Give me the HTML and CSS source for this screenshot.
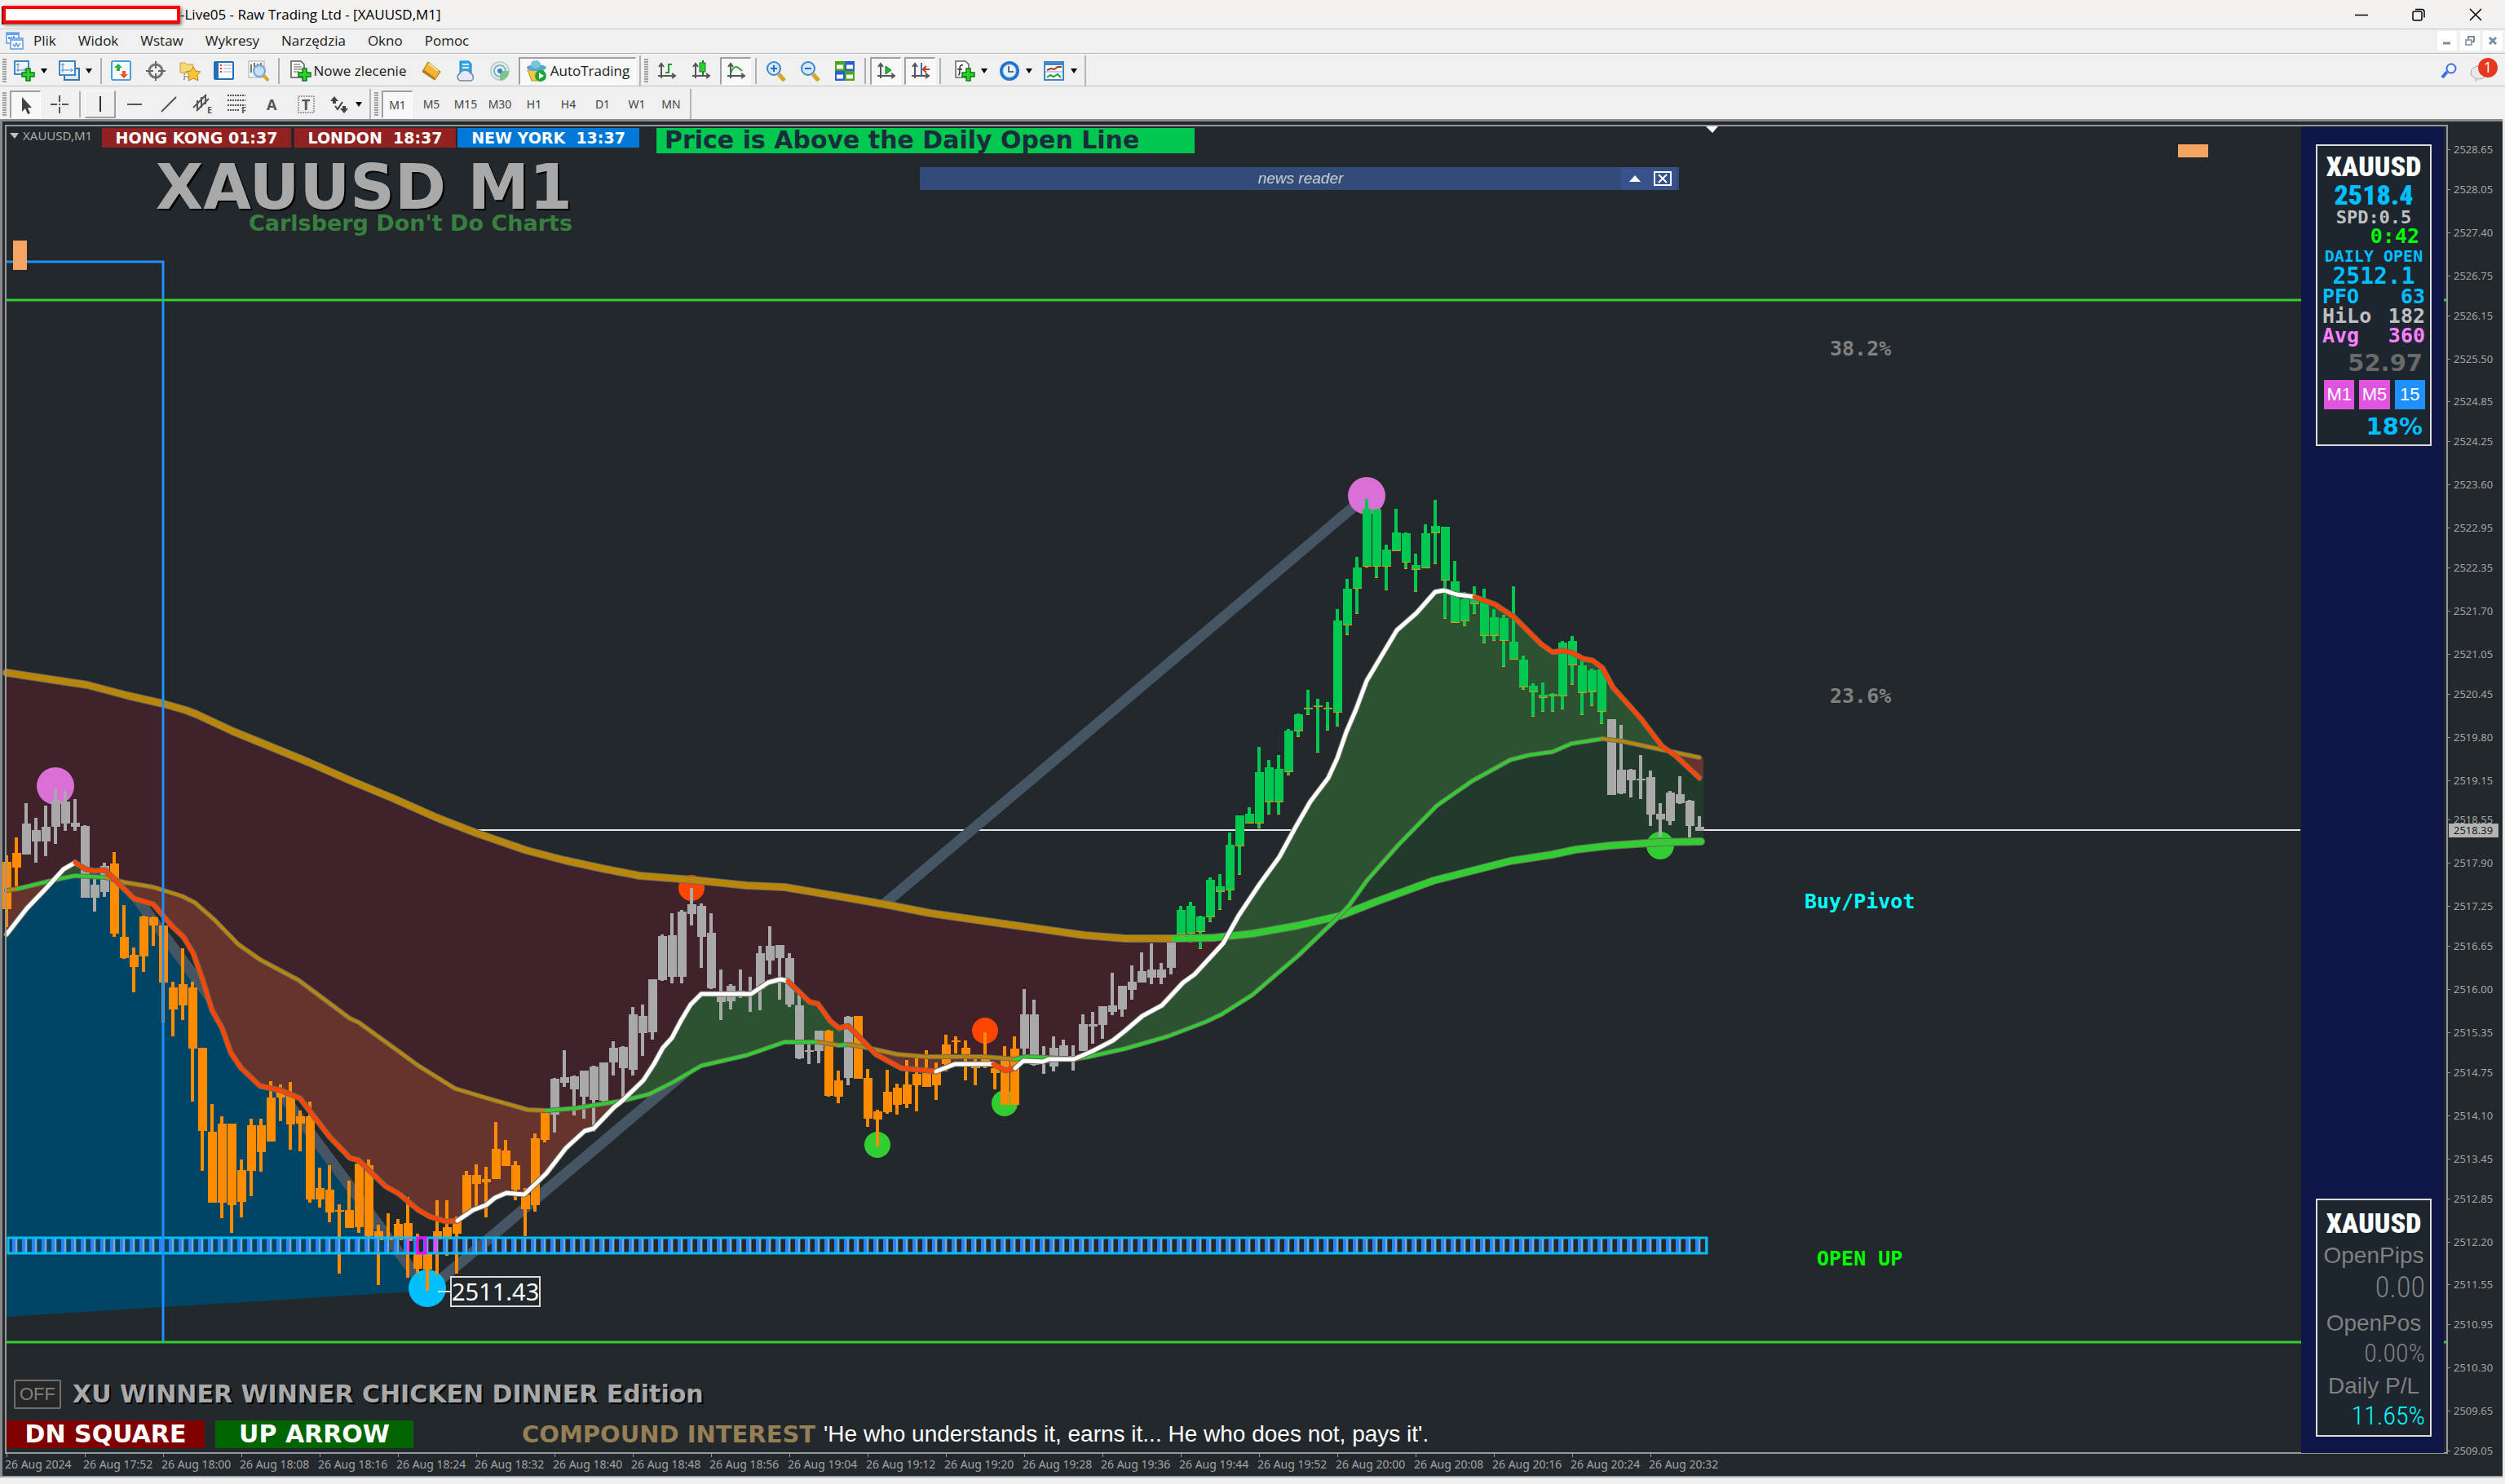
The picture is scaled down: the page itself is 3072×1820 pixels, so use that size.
FILE: index.html
```html
<!DOCTYPE html>
<html lang="pl">
<head>
<meta charset="utf-8">
<title>Live05 - Raw Trading Ltd - [XAUUSD,M1]</title>
<link rel="stylesheet" href="styles.css">
</head>
<body>
<svg class="defs" aria-hidden="true">
  <defs>
    <symbol id="axes" viewBox="0 0 26 26"><path d="M6 5v17M2 19h20M3 8l3-4 3 4M19 16l4 3-4 3" fill="none" stroke="#555" stroke-width="2"/></symbol>
    <symbol id="plus" viewBox="0 0 26 26"><path d="M15 10h5v5h5v5h-5v5h-5v-5h-5v-5h5z" fill="#2fd12f" stroke="#0b7d12" stroke-width="1.5"/></symbol>
    <symbol id="caret" viewBox="0 0 8 6"><path d="M0 0h8l-4 6z" fill="#000"/></symbol>
  </defs>
</svg>

<header class="titlebar">
  <span class="redacted"></span>
  <span class="title">-Live05 - Raw Trading Ltd - [XAUUSD,M1]</span>
  <div class="window-controls">
    <button aria-label="Minimize"><svg width="16" height="16"><path d="M0 8.500h16" stroke="#000" stroke-width="1.500"/></svg></button>
    <button aria-label="Restore"><svg width="16" height="16"><rect x="1" y="4" width="11" height="11" rx="2" fill="none" stroke="#000" stroke-width="1.500"/><path d="M4 1.500h8a3 3 0 0 1 3 3v7" fill="none" stroke="#000" stroke-width="1.500"/></svg></button>
    <button aria-label="Close"><svg width="16" height="16"><path d="M1 1l14 14M15 1L1 15" stroke="#000" stroke-width="1.500"/></svg></button>
  </div>
</header>

<nav class="menubar">
  <svg class="menu-logo" width="22" height="22"><rect x="1" y="1" width="15" height="13" fill="#fff" stroke="#5b9bea" stroke-width="1.500"/><path d="M1 3h15M4 9V6M7 10V6M10 9V5" stroke="#5b9bea" stroke-width="2"/><rect x="6" y="8" width="15" height="13" fill="#fff" stroke="#5b9bea" stroke-width="1.500"/><path d="M6 10h15M9 15l2 3 2-4 2 4 3-4" fill="none" stroke="#5b9bea" stroke-width="1.500"/></svg>
  <a href="#">Plik</a><a href="#">Widok</a><a href="#">Wstaw</a><a href="#">Wykresy</a><a href="#">Narzędzia</a><a href="#">Okno</a><a href="#">Pomoc</a>
  <div class="mdi-controls">
    <button aria-label="Minimize chart"><svg width="12" height="12"><path d="M1 9h9" stroke="#7c8b99" stroke-width="3"/></svg></button>
    <button aria-label="Restore chart"><svg width="12" height="12"><path d="M4 4V1h7v6H8" fill="none" stroke="#7c8b99" stroke-width="2"/><rect x="1" y="5" width="7" height="6" fill="none" stroke="#7c8b99" stroke-width="1.500"/></svg></button>
    <button aria-label="Close chart"><svg width="12" height="12"><path d="M2 2l8 8M10 2l-8 8" stroke="#7c8b99" stroke-width="3"/></svg></button>
  </div>
</nav>

<div class="toolbar toolbar-main">
  <span class="grip"></span>
  <button class="drop" aria-label="New chart"><svg width="26" height="26"><rect x="1" y="1" width="17" height="16" fill="#eef6ff" stroke="#3d87c9" stroke-width="2"/><path d="M5 4v10M3 12h11M3 6l2-2 2 2M12 10l2 2-2 2" stroke="#5b86ad" fill="none"/><use href="#plus"/></svg><svg width="8" height="6"><use href="#caret"/></svg></button>
  <button class="drop" aria-label="Profiles"><svg width="26" height="26"><rect x="7" y="10" width="18" height="14" fill="#d9eafb" stroke="#3d77a9" stroke-width="2"/><rect x="1" y="1" width="19" height="17" fill="#eef6ff" stroke="#3d87c9" stroke-width="2"/><path d="M5 4v11M3 12h14M3 6l2-2 2 2M15 10l2 2-2 2" stroke="#5b86ad" fill="none"/></svg><svg width="8" height="6"><use href="#caret"/></svg></button>
  <span class="sep"></span>
  <button aria-label="Market watch"><svg width="26" height="26"><rect x="1" y="1" width="23" height="23" rx="2" fill="#f4faff" stroke="#4aa0dc" stroke-width="2"/><path d="M9 4l5 5h-3v4H7V9H4z" fill="#22b14c"/><path d="M16 22l-5-5h3v-4h4v4h3z" fill="#f4511e"/></svg></button>
  <button aria-label="Data window"><svg width="26" height="26"><circle cx="13" cy="13" r="8" fill="none" stroke="#777" stroke-width="3"/><path d="M13 1v9M13 16v9M1 13h9M16 13h9" stroke="#666" stroke-width="2"/></svg></button>
  <button aria-label="Navigator"><svg width="26" height="26"><path d="M1 3h6l2 2h8v10H1z" fill="#f8d977" stroke="#c8a03a"/><path d="M6 16v9M6 20h6" stroke="#444" stroke-dasharray="2 1"/><path d="M17 8l3 5 6 1-4 4 1 7-6-3-6 3 1-7-4-4 6-1z" fill="#fbc531" stroke="#b9832a"/></svg></button>
  <button aria-label="Terminal"><svg width="26" height="26"><rect x="1" y="2" width="23" height="21" rx="1" fill="#fff" stroke="#1f6fb5" stroke-width="2"/><path d="M4 2v21" stroke="#1f6fb5" stroke-width="4"/><path d="M8 6h2M8 10h2M8 14h2" stroke="#e33" stroke-width="2"/><path d="M12 6h10M12 10h10M12 14h10" stroke="#9ab"/></svg></button>
  <button aria-label="Strategy tester"><svg width="26" height="26"><rect x="1" y="1" width="19" height="20" fill="#f6f6f0" stroke="#aaa"/><path d="M4 5v10M8 3v10M12 4v6M16 3v8" stroke="#777" stroke-width="2"/><circle cx="14" cy="13" r="7" fill="#bcdcf8" fill-opacity=".85" stroke="#6fa7d6" stroke-width="2"/><path d="M19 18l6 7" stroke="#d8a52c" stroke-width="4"/></svg></button>
  <span class="sep"></span>
  <button class="labelled"><svg width="26" height="26"><path d="M1 1h12l4 4v16H1z" fill="#fff" stroke="#555" stroke-width="1.500"/><path d="M4 5h8M4 8h10M4 11h10M4 14h7" stroke="#555"/><use href="#plus"/></svg>Nowe zlecenie</button>
  <button aria-label="MetaEditor"><svg width="26" height="26"><path d="M9 2l15 12-7 10L2 14z" fill="#f0b531" stroke="#9a6a10"/><path d="M2 14l15 10v-3L3 11z" fill="#b87b12"/><path d="M10 4l11 9" stroke="#fde29a" stroke-width="2"/></svg></button>
  <button aria-label="Cloud"><svg width="26" height="26"><path d="M6 1h11l3 3v13H6z" fill="#2fa8ea" stroke="#1682c4"/><path d="M9 5h8M9 9h8" stroke="#d6f0ff" stroke-width="2"/><path d="M6 25a5 5 0 0 1 0-9 7 6 0 0 1 13 0 5 5 0 0 1 1 9z" fill="#e3ebf5" stroke="#7488ad" stroke-width="1.500"/></svg></button>
  <button aria-label="Signals"><svg width="26" height="26"><circle cx="13" cy="13" r="11" fill="none" stroke="#b9d3cf" stroke-width="2"/><circle cx="13" cy="13" r="7" fill="none" stroke="#7fb3c9" stroke-width="2"/><path d="M13 13v12a12 12 0 0 0 11-12z" fill="#7cc48a"/><circle cx="13" cy="13" r="3" fill="#2f86d6"/></svg></button>
  <button class="labelled auto pressed"><svg width="26" height="26"><path d="M2 12h20l-4 13H7z" fill="#f3c545" stroke="#b98c1c"/><ellipse cx="13" cy="9" rx="12" ry="4" fill="#56a7cf"/><ellipse cx="12" cy="5" rx="6" ry="5" fill="#7bc3e2"/><circle cx="18" cy="19" r="7" fill="#18a832"/><path d="M16 15l6 4-6 4z" fill="#fff"/></svg>AutoTrading</button>
  <span class="edge"></span>
  <span class="grip"></span>
  <button aria-label="Bar chart"><svg width="26" height="26"><use href="#axes"/><path d="M15 4v12M15 5h4M11 15h4" stroke="#169c2e" stroke-width="2" fill="none"/></svg></button>
  <button aria-label="Candlesticks"><svg width="26" height="26"><use href="#axes"/><path d="M15 0v18" stroke="#0e7d20" stroke-width="2"/><rect x="11" y="3" width="7" height="11" fill="#2fd12f" stroke="#0e7d20"/></svg></button>
  <button class="pressed" aria-label="Line chart"><svg width="26" height="26"><use href="#axes"/><path d="M6 16C10 6 13 6 20 13" stroke="#2aa53c" stroke-width="2" fill="none"/></svg></button>
  <span class="sep"></span>
  <button aria-label="Zoom in"><svg width="26" height="26"><path d="M16 17l7 8" stroke="#d8a52c" stroke-width="5"/><circle cx="10" cy="10" r="8" fill="#d3eafc" stroke="#3d87c9" stroke-width="2"/><path d="M6 10h8M10 6v8" stroke="#1f6fb5" stroke-width="2"/></svg></button>
  <button aria-label="Zoom out"><svg width="26" height="26"><path d="M16 17l7 8" stroke="#d8a52c" stroke-width="5"/><circle cx="10" cy="10" r="8" fill="#d3eafc" stroke="#3d87c9" stroke-width="2"/><path d="M6 10h8" stroke="#1f6fb5" stroke-width="2"/></svg></button>
  <button aria-label="Tile windows"><svg width="26" height="26"><rect x="1" y="1" width="12" height="12" fill="#4aa818"/><rect x="13" y="1" width="12" height="12" fill="#2a5fd0"/><rect x="1" y="13" width="12" height="12" fill="#2a5fd0"/><rect x="13" y="13" width="12" height="12" fill="#4aa818"/><path d="M3 8h8M15 8h8M3 20h8M15 20h8" stroke="#f5faf5" stroke-width="5"/></svg></button>
  <span class="sep"></span>
  <button class="pressed" aria-label="Auto scroll"><svg width="26" height="26"><use href="#axes"/><path d="M12 7l7 5-7 5z" fill="#25b53a" stroke="#0e7d20"/></svg></button>
  <button class="pressed" aria-label="Chart shift"><svg width="26" height="26"><use href="#axes"/><path d="M14 3v15" stroke="#2f6fb5" stroke-width="2"/><path d="M24 11h-7M20 7l-4 4 4 4" stroke="#c43a12" stroke-width="2" fill="none"/></svg></button>
  <span class="sep"></span>
  <button class="drop first" aria-label="Indicators"><svg width="26" height="26"><path d="M2 1h12l4 4v16H2z" fill="#fff" stroke="#666" stroke-width="1.500"/><path d="M11 6c-4-1-4 2-4 6s0 6-2 6M4 11h6" stroke="#333" fill="none" stroke-width="1.500"/><use href="#plus"/></svg><svg width="8" height="6"><use href="#caret"/></svg></button>
  <button class="drop" aria-label="Periods"><svg width="26" height="26"><circle cx="13" cy="13" r="12" fill="#1f74d0"/><circle cx="13" cy="13" r="8" fill="#e9f3fc" stroke="#9cc4ea"/><path d="M12 7v7h6" stroke="#345" stroke-width="1.500" fill="none"/></svg><svg width="8" height="6"><use href="#caret"/></svg></button>
  <button class="drop" aria-label="Templates"><svg width="26" height="26"><rect x="1" y="2" width="23" height="22" fill="#fff" stroke="#3d87c9" stroke-width="2"/><path d="M1 4h23" stroke="#3d87c9" stroke-width="4"/><path d="M4 12l5-2 4 1 4-3h5" stroke="#a83420" stroke-width="2" fill="none"/><path d="M2 14h21" stroke="#89b"/><path d="M4 21l4-3 4 2 5-3 4 4" stroke="#2a9a3c" stroke-width="2" fill="none"/></svg><svg width="8" height="6"><use href="#caret"/></svg></button>
  <span class="edge"></span>
  <div class="toolbar-right">
    <button aria-label="Search"><svg width="20" height="20"><circle cx="13" cy="7" r="5.500" fill="#f3f7ff" stroke="#3b6fe0" stroke-width="2"/><path d="M8 11l-6 7" stroke="#3b6fe0" stroke-width="4"/></svg></button>
    <button aria-label="Messages"><svg width="36" height="32"><ellipse cx="11" cy="18" rx="10" ry="8" fill="#e8e8ea" stroke="#aaa"/><path d="M6 24v6l6-5z" fill="#ccc"/><circle cx="22" cy="12" r="12" fill="#e4391f"/><text x="22" y="18" text-anchor="middle" class="badge">1</text></svg></button>
  </div>
</div>

<div class="toolbar toolbar-tools">
  <span class="grip"></span>
  <button class="pressed" aria-label="Cursor"><svg width="26" height="26"><path d="M8 3v18l4-4 3 7 3-1-3-7h5z" fill="#444"/></svg></button>
  <button aria-label="Crosshair"><svg width="26" height="26"><path d="M13 2v8M13 16v8M2 13h8M16 13h8M12 13h2" stroke="#555" stroke-width="2"/></svg></button>
  <span class="sep"></span>
  <button class="raised" aria-label="Vertical line"><svg width="26" height="26"><path d="M13 3v19" stroke="#333" stroke-width="2"/></svg></button>
  <button aria-label="Horizontal line"><svg width="26" height="26"><path d="M4 13h18" stroke="#555" stroke-width="2"/></svg></button>
  <button aria-label="Trendline"><svg width="26" height="26"><path d="M4 22L22 4" stroke="#555" stroke-width="2"/></svg></button>
  <button aria-label="Equidistant channel"><svg width="30" height="30"><path d="M3 19L19 3M7 23L22 8M8 10v12M13 6v13M18 3v12" stroke="#555" stroke-width="2"/><text x="20" y="26" class="glyph">E</text></svg></button>
  <button aria-label="Fibonacci"><svg width="30" height="30"><path d="M3 4h22M3 10h22M3 16h22M3 22h14" stroke="#555" stroke-width="2" stroke-dasharray="2 1"/><text x="20" y="26" class="glyph">F</text></svg></button>
  <button aria-label="Text"><svg width="26" height="26"><text x="7" y="20" class="glyph big">A</text></svg></button>
  <button aria-label="Text label"><svg width="26" height="26"><rect x="4" y="3" width="19" height="20" fill="none" stroke="#555" stroke-dasharray="2 1"/><text x="8" y="20" class="glyph big">T</text></svg></button>
  <button class="drop narrow" aria-label="Arrows"><svg width="26" height="26"><path d="M7 3l5 6H9v3H5V9H2zM19 24l-5-6h3v-3h4v3h3z" fill="#444"/><path d="M8 15l3 4 6-9" stroke="#444" stroke-width="2" fill="none"/></svg><svg width="8" height="6"><use href="#caret"/></svg></button>
  <span class="edge"></span>
  <span class="grip"></span>
  <button class="pressed">M1</button><button>M5</button><button>M15</button><button>M30</button><button>H1</button><button>H4</button><button>D1</button><button>W1</button><button>MN</button>
  <span class="edge"></span>
</div>

<main class="chart">
  <svg id="plot" class="plot" viewBox="0 146 3072 1666" preserveAspectRatio="xMinYMin slice"></svg>

  <div class="overlay">
    <section class="left">
      <div class="sessions">
        <span class="symbol"><svg width="11" height="7"><path d="M0 0h11l-5 7z" fill="#c0c0c0"/></svg>XAUUSD,M1</span>
        <span class="clock closed hk">HONG KONG 01:37</span>
        <span class="clock closed ldn">LONDON&nbsp; 18:37</span>
        <span class="clock open ny">NEW YORK&nbsp; 13:37</span>
        <span class="banner">Price is Above the Daily Open Line</span>
      </div>
      <div class="heading">
        <h1>XAUUSD M1</h1>
        <p>Carlsberg Don't Do Charts</p>
      </div>
      <div class="status">
        <div class="status-row">
          <button class="off">OFF</button>
          <span class="edition">XU WINNER WINNER CHICKEN DINNER Edition</span>
        </div>
        <div class="status-row">
          <span class="tag dn">DN SQUARE</span>
          <span class="tag up">UP ARROW</span>
          <span class="compound">COMPOUND INTEREST</span>
          <span class="quote">'He who understands it, earns it... He who does not, pays it'.</span>
        </div>
      </div>
    </section>

    <aside class="side">
      <div class="panel">
        <div class="sym">XAUUSD</div>
        <div class="sym price">2518.4</div>
        <div class="mono spd">SPD:0.5</div>
        <div class="mono timer">0:42</div>
        <div class="mono daily">DAILY OPEN</div>
        <div class="mono open-price">2512.1</div>
        <div class="mono pair blue"><span>PFO</span><span>63</span></div>
        <div class="mono pair grey"><span>HiLo</span><span>182</span></div>
        <div class="mono pair pink"><span>Avg</span><span>360</span></div>
        <div class="heavy dim">52.97</div>
        <div class="frames"><button>M1</button><button>M5</button><button class="alt">15</button></div>
        <div class="heavy pct">18%</div>
      </div>
      <div class="panel lower">
        <div class="sym">XAUUSD</div>
        <div class="caption">OpenPips</div>
        <div class="digits large">0.00</div>
        <div class="caption">OpenPos</div>
        <div class="digits">0.00%</div>
        <div class="caption">Daily P/L</div>
        <div class="digits gain">11.65%</div>
      </div>
    </aside>
  </div>

  <div class="news">
    <span>news reader</span>
    <button aria-label="Collapse"><svg width="14" height="8"><path d="M0 8h14l-7-8z" fill="#fff"/></svg></button>
    <button aria-label="Close news"><svg width="22" height="18"><rect x="1" y="1" width="20" height="16" fill="none" stroke="#fff" stroke-width="2"/><path d="M6 4l10 10M16 4L6 14" stroke="#fff" stroke-width="2"/></svg></button>
  </div>
</main>
<script src="chart.js"></script>
</body>
</html>
```

FILE: styles.css
```css
* { box-sizing: border-box; }
body {
  margin: 0;
  min-height: 100vh;
  display: flex;
  flex-direction: column;
  background: #f0f0f0;
  font: 17px/20px "Open Sans", "Noto Sans", sans-serif;
  color: #000;
  overflow-x: hidden;
}
button { font: inherit; color: inherit; border: 0; padding: 0; margin: 0; background: none; }
svg { display: block; flex: none; }
.defs { position: absolute; width: 0; height: 0; }

.titlebar { height: 35px; display: flex; align-items: center; background: #f3f2f1; padding-left: 3px; }
.redacted { width: 218px; height: 22px; background: #fff; border: 4px solid #f00; box-shadow: 2px 2px 4px #888, -1px 1px 0 #000; }
.window-controls { margin-left: auto; display: flex; gap: 54px; padding-right: 28px; }

.menubar { height: 31px; display: flex; align-items: center; border-top: 1px solid #c8c8c8; border-bottom: 1px solid #b4b4b4; padding: 0 3px 2px 7px; gap: 27px; }
.menubar a { color: #1a1a1a; text-decoration: none; }
.menu-logo { margin-right: -15px; }
.mdi-controls { margin-left: auto; display: flex; gap: 4px; }
.mdi-controls button { width: 24px; height: 24px; background: #fff; display: grid; place-items: center; }

.toolbar { height: 40px; display: flex; align-items: center; gap: 4px; padding: 2px 0 0 3px; color: #1a1a1a; }
.toolbar-main { border-bottom: 1px solid #c0c0c0; box-shadow: inset 0 1px #fff; }
.toolbar button { width: 38px; height: 34px; display: flex; align-items: center; justify-content: center; }
.toolbar .grip { width: 5px; height: 30px; background: repeating-linear-gradient(#a0a0a0 0 2px, #f0f0f0 2px 3px); }
.toolbar .sep { width: 2px; height: 32px; margin: 0 1px; background: #b0b0b0; }
.toolbar .edge { width: 2px; height: 38px; background: #b4b4b4; }
.toolbar .drop { width: 51px; gap: 7px; }
.toolbar .drop.first { margin-left: 6px; }
.toolbar .pressed { background: #f8f8f8; border: 1px solid #fff; border-top: 2px solid #a0a0a0; border-left: 2px solid #a0a0a0; }
.toolbar .raised { border: 1px solid #fff; border-right: 2px solid #a0a0a0; border-bottom: 2px solid #a0a0a0; }
.toolbar .labelled { width: 158px; gap: 3px; white-space: nowrap; }
.toolbar .auto { width: 144px; gap: 4px; }
.toolbar-right { margin-left: auto; display: flex; padding-right: 6px; gap: 6px; }
.badge { font: 18px "Open Sans", sans-serif; fill: #fff; }
.glyph { font: bold 11px "Open Sans", sans-serif; fill: #555; }
.glyph.big { font-size: 18px; }
.toolbar-tools { padding-top: 4px; font: 14px/20px "Noto Sans", sans-serif; color: #444; }

.chart { position: relative; flex: 1; min-height: 1200px; margin-bottom: 8px; background: #23282c; overflow: hidden; }
.plot { position: absolute; inset: 0; width: 100%; height: 100%; }
.plot text { font-family: "Noto Sans", sans-serif; }
.plot .axis-price { font-size: 13px; fill: #a4a4a4; }
.plot .axis-time { font-size: 14px; fill: #a4a4a4; }
.plot .level { font: bold 25px "DejaVu Sans Mono", monospace; }
.plot .tip { font-size: 29px; fill: #fff; }

.overlay { position: absolute; inset: 9px 71px 30px 8px; display: flex; }
.left { flex: 1; display: flex; flex-direction: column; }
.sessions { display: flex; align-items: flex-start; padding-top: 2px; font: bold 19px/24px "DejaVu Sans", sans-serif; color: #fff; white-space: nowrap; }
.symbol { width: 117px; padding-left: 4px; display: flex; align-items: center; gap: 5px; font: 15px/18px "Noto Sans", sans-serif; color: #a8a8a8; }
.clock { height: 24px; text-align: center; }
.closed { background: #922222; }
.open { background: #0078d7; }
.hk { width: 232px; margin-right: 4px; }
.ldn { width: 198px; margin-right: 2px; }
.ny { width: 223px; margin-right: 21px; }
.banner { width: 660px; height: 31px; padding-left: 10px; background: #00c850; color: #1c2c3c; font-size: 30px; line-height: 30px; }
.heading { width: 694px; text-align: right; font: bold 27px/24px "DejaVu Sans", sans-serif; }
.heading h1 { margin: 10px 0 0; font-size: 76px; line-height: 64px; color: #a9a9a9; text-shadow: 2px 2px #000; white-space: nowrap; }
.heading p { margin: 0; color: #37803f; }
.status { margin-top: auto; padding-bottom: 6px; display: grid; gap: 14px; }
.status-row { display: flex; align-items: center; height: 35px; white-space: nowrap; }
.off { width: 58px; height: 36px; margin: 0 14px 0 9px; border: 2px solid #6e6e6e; border-radius: 2px; background: #262626; color: #808080; font: 22px/30px "Liberation Sans", sans-serif; }
.edition { font: bold 30px/34px "DejaVu Sans", sans-serif; color: #a9a9a9; text-shadow: 2px 2px #000; }
.tag { width: 243px; text-align: center; color: #fff; margin-right: 13px; font: bold 30px/34px "DejaVu Sans", sans-serif; }
.dn { background: #800000; }
.up { background: #006400; }
.compound { width: 370px; margin-left: 120px; color: #967f55; font: bold 29px/34px "DejaVu Sans", sans-serif; }
.quote { font: 28px/34px "Liberation Sans", sans-serif; color: #fff; }

.side { width: 175px; margin-right: 4px; padding: 22px 15px 20px 18px; background: #0e1748; display: flex; flex-direction: column; justify-content: space-between; }
.panel { height: 370px; border: 2px solid #dcdcdc; background: #1d262f; padding: 7px 6px 0; white-space: nowrap; }
.lower { height: 292px; padding-top: 10px; }
.sym { font: 900 34px/36px "Roboto Condensed", Roboto, sans-serif; color: #fff; text-align: center; }
.price { color: #00bfff; line-height: 34px; }
.mono { font: bold 25px/24px "DejaVu Sans Mono", monospace; }
.spd { font-size: 22px; line-height: 22px; color: #c0c0c0; text-align: center; }
.timer { color: #0f0; text-align: right; padding-right: 7px; }
.daily { font-size: 20px; color: #00bfff; text-align: center; }
.open-price { font-size: 28px; line-height: 26px; color: #00bfff; text-align: center; }
.pair { display: flex; justify-content: space-between; }
.blue { color: #00bfff; }
.grey { color: #c0c0c0; }
.pink { color: #ff80ff; }
.heavy { font: bold 29px/42px "DejaVu Sans", sans-serif; text-align: right; padding-right: 3px; }
.dim { color: #696969; }
.pct { color: #00bfff; }
.frames { display: flex; gap: 6px; padding-left: 2px; }
.frames button { width: 38px; height: 36px; background: #e055e0; color: #fff; font: 22px/36px "Liberation Sans", sans-serif; }
.frames .alt { background: #1e90ff; }
.caption { font: 28px/34px "Liberation Sans", sans-serif; color: #808080; text-align: center; margin-top: 5px; }
.digits { font: 300 32px/38px "Roboto Condensed", Roboto, sans-serif; color: #808080; text-align: right; }
.large { font-size: 36px; line-height: 44px; }
.gain { color: #0ff; }

/* floating news window */
.news { position: absolute; left: 1128px; top: 59px; width: 931px; height: 28px; padding-right: 3px; display: flex; align-items: center; background: #324b78; color: #c8ccd4; font: italic 19px/28px "Liberation Sans", sans-serif; }
.news span { flex: 1; text-align: center; padding-left: 74px; }
.news button { width: 34px; height: 28px; display: grid; place-items: center; background: #37528a; }
```

FILE: chart.js
```js
const NS = 'http://www.w3.org/2000/svg';
const plot = document.getElementById('plot');
let defs;

function add(tag, attrs, text, parent) {
  const el = document.createElementNS(NS, tag);
  for (const k in attrs) el.setAttribute(k, attrs[k]);
  if (text) el.textContent = text;
  (parent || plot).appendChild(el);
  return el;
}
const rect = (x, y, width, height, fill, extra) => add('rect', { x, y, width, height, fill, ...extra });
const path = (d, attrs) => add('path', { d, fill: 'none', ...attrs });

// Moving averages: point lists, each run drawn in its own colour.
const GOLD = '#b8860b', LIME = '#32cd32', RED = '#ff4500', WHITE = '#ffffff';
const slow = [
  [GOLD, '8,825 67,834 107,840 156,853 200,863 228,871 241,876 286,897 335,917 379,935 429,957 482,979 536,1003 585,1022 646,1043 692,1055 738,1065 784,1074 848,1079 916,1086 962,1088 1039,1101 1090,1110 1141,1120 1238,1134 1330,1147 1380,1151 1441,1151'],
  [LIME, '1441,1151 1489,1150 1536,1145 1592,1135 1644,1123 1687,1106 1758,1080 1805,1068 1852,1056 1904,1048 1932,1042 1975,1037 2036,1033 2086,1032']
];
const mid = [
  [GOLD, '8,1092 22,1090'],
  [LIME, '22,1090 67,1079 92,1074 129,1076'],
  [GOLD, '129,1076 152,1082 188,1088 223,1099 239,1107 263,1128 292,1158 319,1177 366,1202 429,1249 440,1254 513,1307 558,1335 598,1347 647,1361 670,1362'],
  [LIME, '670,1362 707,1359 763,1350 796,1342 824,1328 860,1307 916,1294 962,1278 1003,1278'],
  [GOLD, '1003,1278 1029,1282'],
  [LIME, '1029,1282 1040,1281'],
  [GOLD, '1040,1281 1059,1284 1100,1293 1136,1296 1207,1296 1245,1299'],
  [LIME, '1245,1299 1258,1296 1284,1297 1317,1299 1335,1296 1380,1286 1432,1271 1479,1253 1498,1244 1536,1220 1592,1172 1640,1126 1654,1111 1677,1079 1715,1036 1762,988 1805,958 1852,932 1875,926 1904,922 1927,912 1965,906'],
  [GOLD, '1965,906 1989,909 2036,919 2084,929']
];
const fast = [
  [WHITE, '8,1146 33,1114 56,1090 78,1066 92,1058'],
  [RED, '92,1058 105,1066 116,1068 129,1067 164,1102 188,1109 212,1137 225,1149 237,1169 248,1200 260,1239 272,1260 283,1291 295,1309 319,1332 344,1337 368,1347 404,1394 429,1420 440,1423 473,1455 489,1464 513,1484 527,1492 547,1498 561,1497'],
  [WHITE, '561,1497 580,1484 596,1478 607,1469 621,1463 643,1465 670,1439 694,1408 717,1387 728,1384 753,1358 763,1350 789,1325 802,1305 813,1285 824,1273 835,1252 847,1232 860,1219 921,1219 942,1205 957,1201 966,1203'],
  [RED, '966,1203 993,1229 1003,1231 1018,1252 1029,1261 1040,1258 1054,1272 1074,1293 1105,1310 1148,1314'],
  [WHITE, '1148,1314 1171,1305 1218,1305'],
  [RED, '1218,1305 1233,1313 1245,1310'],
  [WHITE, '1245,1310 1255,1301 1279,1302 1286,1299 1317,1299 1340,1289 1365,1276 1380,1264 1401,1246 1425,1233 1451,1205 1465,1195 1500,1157 1519,1123 1545,1084 1569,1051 1588,1016 1607,983 1629,954 1640,930 1651,898 1663,870 1676,835 1713,773 1737,752 1760,726 1771,724 1786,729 1808,732'],
  [RED, '1808,732 1833,741 1857,757 1890,790 1904,800 1916,798 1927,800 1942,808 1953,810 1965,819 1978,843 2012,881 2038,915 2055,927 2084,954']
];

// Candles from 17:44, one a minute: colour, high, body top, body bottom, low.
const candles = `o 1049 1057 1115 1137|o 1027 1046 1064 1087|g 985 1010 1048 1048|g 1003 1018 1032 1058|g 988 1014 1032 1050|g 967 981 1014 1035|g 970 983 1010 1019|g 980 1009 1014 1019|g 1012 1013 1101 1101|g 1077 1085 1101 1118|g 1058 1062 1094 1100|o 1045 1059 1145 1149|o 1110 1149 1175 1176|o 1162 1171 1186 1217|o 1123 1124 1173 1192|o 1124 1125 1135 1160|o 1135 1135 1205 1254|o 1204 1211 1238 1271|o 1163 1207 1233 1251|o 1204 1211 1286 1351|o 1285 1285 1387 1436|o 1354 1388 1475 1475|o 1369 1378 1475 1494|o 1378 1378 1478 1512|o 1422 1435 1474 1493|o 1372 1380 1436 1467|o 1372 1380 1413 1437|o 1326 1346 1400 1400|o 1330 1339 1346 1375|o 1327 1344 1379 1410|o 1362 1369 1378 1412|o 1351 1369 1471 1475|o 1432 1457 1471 1481|o 1429 1459 1487 1499|o 1477 1484 1486 1562|o 1448 1484 1506 1506|o 1426 1427 1505 1512|o 1422 1429 1516 1520|o 1502 1510 1521 1576|o 1488 1518 1521 1522|o 1495 1501 1521 1523|o 1468 1500 1522 1567|o 1513 1537 1556 1561|o 1531 1536 1557 1583|o 1472 1510 1520 1563|o 1472 1505 1520 1540|o 1492 1496 1513 1562|o 1436 1441 1488 1493|o 1428 1441 1452 1480|o 1431 1446 1450 1493|o 1376 1409 1446 1446|o 1398 1411 1430 1430|o 1424 1429 1459 1472|o 1457 1465 1483 1516|o 1390 1396 1478 1486|o 1365 1365 1398 1401|g 1322 1323 1367 1389|g 1288 1321 1328 1333|g 1319 1320 1336 1368|g 1313 1313 1345 1372|g 1307 1308 1349 1388|g 1303 1303 1350 1351|g 1277 1285 1303 1319|g 1283 1284 1310 1348|g 1235 1244 1312 1319|g 1232 1246 1267 1295|g 1201 1201 1266 1275|g 1146 1148 1202 1203|g 1120 1147 1198 1206|g 1116 1118 1198 1206|g 1089 1109 1121 1135|g 1108 1111 1149 1187|g 1120 1144 1212 1213|g 1189 1222 1229 1251|g 1207 1209 1228 1238|g 1189 1215 1218 1224|g 1198 1217 1220 1241|g 1160 1169 1213 1239|g 1136 1160 1178 1195|g 1159 1159 1175 1226|g 1169 1175 1232 1235|g 1220 1233 1298 1299|g 1280 1288 1290 1305|g 1264 1264 1289 1304|o 1263 1264 1344 1345|o 1313 1325 1345 1353|g 1246 1247 1322 1331|o 1246 1246 1323 1323|o 1311 1322 1372 1382|o 1361 1363 1373 1406|o 1312 1339 1364 1366|o 1329 1334 1355 1367|o 1300 1330 1354 1359|o 1298 1317 1331 1363|o 1288 1313 1333 1333|o 1303 1315 1331 1349|o 1269 1281 1305 1314|o 1271 1276 1278 1292|o 1276 1285 1298 1325|o 1295 1308 1310 1331|o 1266 1296 1307 1310|o 1307 1310 1316 1336|o 1283 1297 1355 1355|o 1271 1286 1355 1355|g 1213 1244 1286 1297|g 1226 1244 1306 1307|g 1283 1298 1304 1317|g 1271 1285 1308 1314|g 1275 1282 1295 1295|g 1282 1295 1300 1313|g 1244 1256 1289 1289|g 1241 1256 1259 1280|g 1234 1234 1257 1274|g 1193 1233 1241 1245|g 1209 1209 1238 1247|g 1184 1204 1214 1226|g 1168 1191 1205 1205|g 1157 1189 1199 1207|g 1181 1189 1199 1207|g 1155 1155 1187 1195|u 1111 1116 1146 1146|u 1106 1111 1145 1156|u 1123 1124 1143 1164|u 1076 1079 1125 1131|u 1072 1087 1094 1116|u 1021 1036 1092 1104|u 1000 1000 1038 1073|u 990 998 1010 1010|u 916 947 1010 1016|u 932 941 984 999|u 926 943 984 999|u 894 896 947 951|u 875 876 897 904|u 846 868 869 877|u 857 865 867 923|u 861 868 869 896|u 747 761 874 891|u 710 722 767 779|u 683 696 722 753|u 612 624 695 696|u 624 625 695 709|u 668 674 695 724|u 624 653 676 676|u 653 654 690 698|u 679 693 699 726|u 643 654 697 697|u 613 645 654 692|u 646 646 712 759|u 688 713 764 764|u 726 735 762 768|u 719 731 741 753|u 722 736 780 789|u 747 757 780 786|u 754 758 786 818|u 719 787 809 809|u 804 809 843 846|u 838 841 849 879|u 837 852 856 873|u 850 851 854 873|u 786 788 854 870|u 780 786 816 840|u 805 816 850 877|u 820 822 849 866|u 815 821 873 888|g 882 882 975 975|g 889 944 973 974|g 943 944 957 978|g 926 955 956 980|g 945 953 999 1013|g 985 998 1005 1026|g 970 972 1007 1012|g 952 974 985 986|g 981 982 1013 1027|g 1001 1014 1019 1019`
  .split('|').map(c => c.split(' '));
const COLORS = { o: '#ff8c00', g: '#a9a9a9', u: '#00c850' };

const EDGE = 2089;
function points(runs) {
  const list = runs.map(r => r[1]).join(' ').split(' ');
  return [...list, `${EDGE},${list[list.length - 1].split(',')[1]}`];
}
const between = (a, b) => 'M' + [...points(a), ...points(b).reverse()].join(' L') + 'Z';

defs = add('defs', {});
function clip(id, runs, edge) {
  const c = add('clipPath', { id }, '', defs);
  const p = points(runs);
  add('path', { d: `M0,${edge} L0,${p[0].split(',')[1]} L${p.join(' L')} L${EDGE},${edge}Z` }, '', c);
}
clip('above-mid', mid, 0);
clip('below-mid', mid, 1812);
clip('above-slow', slow, 0);
clip('below-slow', slow, 1812);
const stripes = add('pattern', { id: 'stripes', x: 1971, y: 0, width: 12, height: 20, patternUnits: 'userSpaceOnUse' }, '', defs);
[[0, 3, '#1e86ff'], [3, 1, '#6a70cd'], [4, 2, '#58b4ee'], [6, 1, '#4a5a50']].forEach(([x, width, fill]) =>
  add('rect', { x, y: 0, width, height: 20, fill }, '', stripes));

// Current price line, range fill and zigzag
rect(8, 1017, 2813, 2, '#e6e6e6');
path('M8 1000 L68 967 L524 1583 L8 1615Z', { fill: '#004664' });
path('M68 967 L524 1583 L1676 608', { stroke: '#465564', 'stroke-width': 13 });

// Bands between the averages
path(between(slow, mid), { fill: '#40222a', 'clip-path': 'url(#below-slow)' });
path(between(slow, mid), { fill: '#213a2c', 'clip-path': 'url(#above-slow)' });
path(between(mid, fast), { fill: '#66342c', 'clip-path': 'url(#below-mid)' });
path(between(mid, fast), { fill: '#2b5331', 'clip-path': 'url(#above-mid)' });

// Swing markers
[[68, 964, 23, '#da70d6'], [848, 1089, 16, RED], [1076, 1404, 16, LIME], [1208, 1264, 16, RED],
 [1232, 1353, 16, LIME], [1676, 608, 23, '#da70d6'], [2036, 1037, 17, LIME], [524, 1580, 23, '#00bfff']]
  .forEach(([cx, cy, r, fill]) => add('circle', { cx, cy, r, fill }));

candles.forEach(([kind, high, top, bottom, low], i) => {
  const x = 8 + i * 12;
  rect(x - 2, high, 4, low - high, COLORS[kind]);
  rect(x - 5, top, 11, Math.max(2, bottom - top), COLORS[kind]);
  if (kind === 'u') {
    rect(x - 2, low - 1, 4, 1, COLORS.o);
    rect(x - 5, bottom - 1, 11, 1, COLORS.o);
  }
});

// Daily open box
rect(10, 1518, 2083, 19, 'url(#stripes)', { stroke: '#00bfff', 'stroke-width': 3 });
rect(499, 1519, 3, 17, '#ff40ff');
rect(532, 1519, 4, 17, '#ff40ff');
rect(512, 1518, 10, 19, 'none', { stroke: '#f0f', 'stroke-width': 3 });

function line(runs, width) {
  runs.forEach(([, p]) => path('M' + p.split(' ').join(' L'), { stroke: '#6b6b60', 'stroke-width': width + 2, 'stroke-linejoin': 'round', 'stroke-linecap': 'round' }));
  runs.forEach(([stroke, p]) => path('M' + p.split(' ').join(' L'), { stroke, 'stroke-width': width, 'stroke-linejoin': 'round', 'stroke-linecap': 'round' }));
}
line(slow, 8);
line(mid, 4);
line(fast, 5);

// Range lines
path('M8 321H200V1646', { stroke: '#1e90ff', 'stroke-width': 3 });
path('M8 368H3000M8 1646H3000', { stroke: LIME, 'stroke-width': 3 });

// Small markers
rect(16, 295, 17, 36, '#f4a460');
rect(2671, 177, 37, 16, '#f4a460');
path('M2092 155h15l-7 8z', { fill: '#fff' });

[['38.2%', 2244, 436, '#808080'], ['23.6%', 2244, 862, '#808080'], ['Buy/Pivot', 2213, 1114, '#00ffff'], ['OPEN UP', 2228, 1552, '#00ff00']]
  .forEach(([t, x, y, fill]) => add('text', { x, y, fill, class: 'level' }, t));

path('M537 1584H552', { stroke: '#dcdcdc', 'stroke-width': 2 });
rect(553, 1566, 109, 36, '#23282c', { stroke: '#dcdcdc', 'stroke-width': 2 });
add('text', { x: 554, y: 1595, class: 'tip' }, '2511.43');

// Frame
rect(0, 146, 3072, 3, '#8a8a8a');
rect(0, 146, 3, 1666, '#8a8a8a');
rect(0, 1810, 3072, 2, '#a0a0a0');
rect(3069, 146, 3, 1666, '#e8e8e8');
path('M7 1782V154H3001V1782Z', { stroke: '#989898', 'stroke-width': 2 });

// Price axis
const yOf = price => Math.round(183 + (2528.65 - price) * 81.43);
[2528.65, 2528.05, 2527.4, 2526.75, 2526.15, 2525.5, 2524.85, 2524.25, 2523.6, 2522.95, 2522.35, 2521.7, 2521.05, 2520.45,
 2519.8, 2519.15, 2518.55, 2517.9, 2517.25, 2516.65, 2516, 2515.35, 2514.75, 2514.1, 2513.45, 2512.85, 2512.2, 2511.55,
 2510.95, 2510.3, 2509.65, 2509.05].forEach(p => {
  rect(3001, yOf(p), 4, 1, '#989898');
  add('text', { x: 3009, y: yOf(p) + 5, class: 'axis-price' }, p.toFixed(2));
});
rect(3003, 1010, 61, 17, '#b4b4b4');
add('text', { x: 3009, y: 1023, class: 'axis-price', style: 'fill:#222' }, '2518.39');

// Time axis, a label every 8 minutes
for (let k = 0; k < 22; k++) {
  const m = 17 * 60 + 44 + k * 8;
  const label = k ? `${Math.floor(m / 60)}:${String(m % 60).padStart(2, '0')}` : '2024';
  rect(8 + k * 96, 1783, 1, 4, '#989898');
  add('text', { x: 6 + k * 96, y: 1801, class: 'axis-time' }, `26 Aug ${label}`);
}
```
